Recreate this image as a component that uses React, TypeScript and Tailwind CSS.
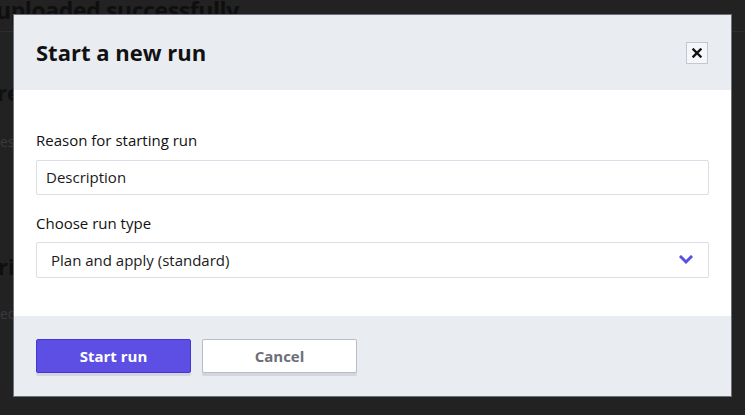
import React from "react"

const font = { fontFamily: '"Open Sans", "Noto Sans", sans-serif' }

function ChevronDown() {
  return (
    <svg width="14" height="10" viewBox="0 0 14 10" className="text-[#5b4ee3]">
      <polyline points="2,2 7,7 12,2" fill="none" stroke="currentColor" strokeWidth="3" strokeLinecap="square" />
    </svg>
  )
}

function CloseIcon() {
  return (
    <svg width="10" height="10" viewBox="0 0 10 10">
      <path d="M1.5 1.5 L8.5 8.5 M8.5 1.5 L1.5 8.5" stroke="#111" strokeWidth="2.4" strokeLinecap="square" />
    </svg>
  )
}

export default function App() {
  return (
    <div className="relative w-[745px] h-[415px] overflow-hidden bg-[#222222]" style={font}>
      {/* dimmed page behind the dialog */}
      <div className="flex flex-col">
        <h1 className="text-[23px] font-bold leading-none text-[#0f0f0f] mt-[-1px] ml-[-4px] h-[33px] border-b border-[#2d2d2d] tracking-[-0.4px] whitespace-nowrap">
          uploaded successfully
        </h1>
        <div className="mt-[49px] ml-[-3px] text-[22px] font-bold leading-none text-[#0f0f0f]">re</div>
        <div className="mt-[32px] text-[14px] leading-none text-[#3a3a3a]">es</div>
        <div className="mt-[106px] ml-[-2px] text-[22px] font-bold leading-none text-[#0f0f0f]">ri</div>
        <div className="mt-[30px] text-[14px] leading-none text-[#3a3a3a]">eq</div>
      </div>

      {/* dialog */}
      <div className="absolute left-[13px] top-[14px] w-[719px] h-[383px] flex flex-col border border-[#6b7079] bg-white">
        <div className="h-[75px] flex items-center justify-between bg-[#e9ecf1] pl-[22px] pr-[23px]">
          <h2 className="text-[22px] font-bold text-[#111]">Start a new run</h2>
          <button className="w-[22px] h-[22px] flex items-center justify-center border border-[#c3c7d0] bg-[#f5f6f9]">
            <CloseIcon />
          </button>
        </div>

        <div className="flex-1 flex flex-col px-[22px] pt-[38px] text-[#111]">
          <label className="text-[15px] leading-[24px] font-medium">Reason for starting run</label>
          <div className="mt-[8px] h-[35px] flex items-center border border-[#dcdde6] rounded-[2px] pl-[9px] text-[15px] text-[#1a1a1a]">
            Description
          </div>
          <label className="mt-[16px] text-[15px] leading-[24px] font-medium">Choose run type</label>
          <div className="mt-[7px] h-[36px] flex items-center justify-between border border-[#dcdde6] rounded-[2px] pl-[14px] pr-[15px] text-[15px] text-[#1a1a1a]">
            <span>Plan and apply (standard)</span>
            <ChevronDown />
          </div>
        </div>

        <div className="h-[80px] flex items-center gap-[11px] bg-[#e9ecf1] px-[22px]">
          <button className="w-[155px] h-[34px] rounded-[2px] border border-[#4536d6] bg-[#5d4fe4] text-white text-[15px] font-bold shadow-[0_3px_0_#d3d6de]">
            Start run
          </button>
          <button className="w-[155px] h-[34px] rounded-[2px] border border-[#b9bcc5] bg-white text-[#6b6e78] text-[15px] font-bold shadow-[0_3px_0_#d3d6de]">
            Cancel
          </button>
        </div>
      </div>
    </div>
  )
}
